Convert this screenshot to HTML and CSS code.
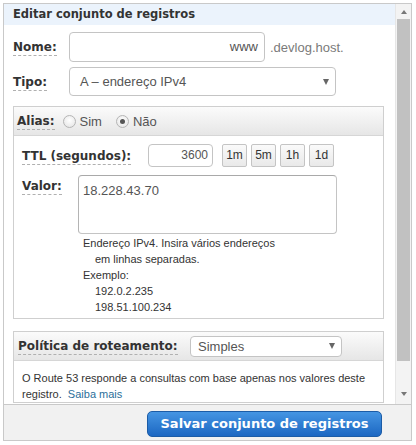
FILE: index.html
```html
<!DOCTYPE html>
<html lang="pt">
<head>
<meta charset="utf-8">
<title>Editar conjunto de registros</title>
<link rel="stylesheet" href="styles.css">
</head>
<body>
<div class="panel">
  <div class="scroll">
    <div class="content">
      <div class="title">Editar conjunto de registros</div>
      <div class="form">
        <div class="row row-nome">
          <span class="label"><span class="u">Nome:</span></span>
          <div class="field name-input">www</div>
          <span class="suffix">.devlog.host.</span>
        </div>
        <div class="row row-tipo">
          <span class="label"><span class="u">Tipo:</span></span>
          <div class="field select type-select"><span>A – endereço IPv4</span><span class="caret"></span></div>
        </div>

        <div class="box alias-box">
          <div class="box-head">
            <span class="head-label"><span class="u">Alias:</span></span>
            <span class="radio"><span class="dot"></span>Sim</span>
            <span class="radio"><span class="dot checked"></span>Não</span>
          </div>
          <div class="box-body">
            <div class="ttl-row">
              <span class="ttl-label"><span class="u">TTL (segundos):</span></span>
              <div class="field ttl-input">3600</div>
              <div class="ttl-buttons">
                <span class="tbtn">1m</span>
                <span class="tbtn">5m</span>
                <span class="tbtn">1h</span>
                <span class="tbtn">1d</span>
              </div>
            </div>
            <div class="valor-row">
              <span class="valor-label"><span class="u">Valor:</span></span>
              <div class="valor-col">
                <div class="field textarea">18.228.43.70</div>
                <div class="help">
                  <div>Endereço IPv4. Insira vários endereços</div>
                  <div class="ind">em linhas separadas.</div>
                  <div>Exemplo:</div>
                  <div class="ind">192.0.2.235</div>
                  <div class="ind">198.51.100.234</div>
                </div>
              </div>
            </div>
          </div>
        </div>

        <div class="box policy-box">
          <div class="box-head">
            <span class="head-label policy-label"><span class="u">Política de roteamento:</span></span>
            <div class="field select policy-select"><span>Simples</span><span class="caret"></span></div>
          </div>
          <div class="policy-body">
            <div>O Route 53 responde a consultas com base apenas nos valores deste</div>
            <div>registro.&nbsp; <span class="link">Saiba mais</span></div>
          </div>
        </div>
      </div>
    </div>
    <div class="scrollbar">
      <span class="arrow up"></span>
      <span class="thumb"></span>
      <span class="track-fill"></span>
      <span class="arrow down"></span>
    </div>
  </div>
  <div class="footer">
    <span class="save">Salvar conjunto de registros</span>
  </div>
</div>
</body>
</html>
```

FILE: styles.css
```css
* { box-sizing: border-box; }
html, body { margin: 0; padding: 0; background: #fff; }
body { font-family: "Liberation Sans", Arial, sans-serif; color: #333; }

.panel {
  margin: 3px 0 0 3px;
  width: 409px;
  height: 438px;
  border: 1px solid #c9c9c9;
  display: flex;
  flex-direction: column;
}

.scroll { display: flex; height: 400px; overflow: hidden; }
.content { flex: 1; overflow: hidden; }

.title {
  height: 21px;
  padding: 3px 0 0 9px;
  line-height: 18px;
  background: #ebf3fc;
  font: bold 11.5px "DejaVu Sans", Verdana, sans-serif;
  color: #333;
}

.form { padding: 7px 0 0 9px; }

.row { display: flex; align-items: center; }
.row-nome { height: 30px; }
.row-tipo { margin-top: 5px; height: 29px; }

.label {
  width: 56px;
  font: bold 12px "DejaVu Sans", Verdana, sans-serif;
  color: #333;
}
.u { border-bottom: 1px dashed #b0b0b0; padding-bottom: 1px; }

.field {
  border: 1px solid #c4c4c4;
  border-radius: 4px;
  background: #fff;
  font: 13px "Liberation Sans", Arial, sans-serif;
  color: #555;
}
.name-input {
  width: 196px; height: 30px;
  text-align: right; padding-right: 6px;
  line-height: 28px;
}
.suffix { margin-left: 5px; font-size: 13px; color: #7a7a7a; }

.select {
  display: flex; align-items: center; justify-content: space-between;
  padding: 0 6px 0 10px;
}
.type-select { width: 267px; height: 29px; }
.caret {
  width: 0; height: 0;
  border-left: 3.5px solid transparent;
  border-right: 3.5px solid transparent;
  border-top: 6px solid #666;
}

.box { width: 371px; border: 1px solid #cfcfcf; }
.alias-box { margin-top: 10px; }
.policy-box { margin-top: 12px; }

.box-head {
  display: flex; align-items: center;
  height: 29px;
  border-bottom: 1px solid #d6d6d6;
  background: linear-gradient(#fbfbfb, #e6e6e6);
  padding-left: 3px;
}
.head-label { font: bold 12px "DejaVu Sans", Verdana, sans-serif; color: #333; }

.radio {
  display: inline-flex; align-items: center;
  font-size: 13px; color: #555;
  margin-left: 8px;
}
.radio + .radio { margin-left: 14px; }
.dot {
  width: 13px; height: 13px; border-radius: 50%;
  border: 1px solid #b5b5b5;
  background: radial-gradient(circle at 50% 40%, #fff, #e2e2e2);
  margin-right: 4px;
  position: relative;
}
.dot.checked::after {
  content: ""; position: absolute;
  left: 3px; top: 3px; width: 5px; height: 5px; border-radius: 50%;
  background: #555;
}

.box-body { padding: 8px 0 3px 8px; }

.ttl-row { display: flex; align-items: center; height: 23px; }
.ttl-label { width: 126px; font: bold 12px "DejaVu Sans", Verdana, sans-serif; color: #333; }
.ttl-input { width: 65px; height: 23px; text-align: right; padding-right: 4px; line-height: 21px; font-size: 12px; }
.ttl-buttons { display: flex; gap: 4px; margin-left: 9px; }
.tbtn {
  height: 23px; width: 25px;
  border: 1px solid #c4c4c4; border-radius: 2px;
  background: linear-gradient(#fafafa, #e9e9e9);
  font-size: 12px; line-height: 21px; color: #333; text-align: center;
}

.valor-row { display: flex; margin-top: 8px; }
.valor-label { width: 56px; padding-top: 4px; font: bold 12px "DejaVu Sans", Verdana, sans-serif; color: #333; }
.textarea {
  width: 259px; height: 59px;
  padding: 7px 4px;
  font-size: 13px; line-height: 16px;
  border-color: #a9a9a9 #c4c4c4 #c4c4c4 #b4b4b4;
}
.help { margin: 1px 0 0 5px; font-size: 11px; line-height: 16px; color: #333; }
.help .ind { padding-left: 12px; }

.box-head .policy-label { width: 173px; padding-left: 1px; }
.policy-select { width: 152px; height: 21px; padding: 0 6px 0 7px; }
.policy-body { padding: 9px 0 0 8px; font-size: 11px; line-height: 16px; color: #333; }
.link { color: #2b6f9b; }

.scrollbar {
  width: 16px;
  display: flex; flex-direction: column; align-items: center;
  background: #f3f3f3;
  border-left: 1px solid #e6e6e6;
}
.arrow { width: 0; height: 0; border-left: 3.5px solid transparent; border-right: 3.5px solid transparent; }
.arrow.up { margin-top: 6px; border-bottom: 4px solid #777; }
.arrow.down { margin-bottom: 8px; border-top: 4px solid #777; }
.thumb { margin-top: 5px; width: 13px; height: 342px; background: #c1c1c1; }
.track-fill { flex: 1; }

.footer {
  flex: 1;
  border-top: 1px solid #c9c9c9;
  background: #f1f1f1;
  display: flex; justify-content: flex-end; align-items: flex-start;
  padding: 6px 29px 0 0;
}
.save {
  display: block;
  width: 235px; height: 26px;
  border: 1px solid #1c5ca6;
  border-radius: 5px;
  background: linear-gradient(#4595e3, #1c67c2);
  color: #fff;
  font: bold 13px "DejaVu Sans", Verdana, sans-serif;
  line-height: 24px;
  text-align: center;
}
```
